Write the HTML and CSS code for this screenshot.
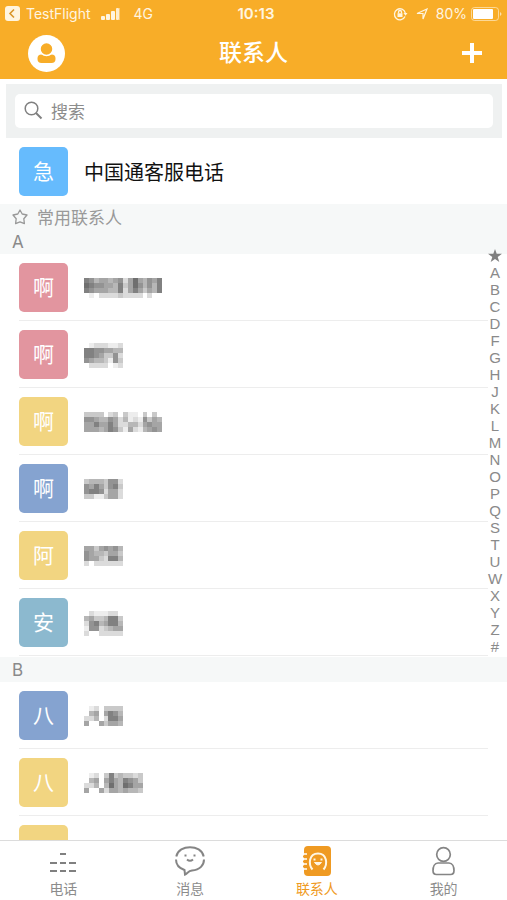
FILE: index.html
```html
<!DOCTYPE html>
<html lang="zh-CN">
<head>
    <meta charset="UTF-8">
    <meta name="viewport" content="width=device-width, initial-scale=1.0">
    <title>联系人</title>
    <link rel="stylesheet" href="styles.css">
</head>
<body>
    <header class="header">
        <!-- Status bar -->
        <div class="status">
            <div class="status-left">
                <svg width="15" height="15" viewBox="0 0 15 15"><rect width="15" height="15" rx="3" fill="#fff5e0"/><path d="M9 3.5L5 7.5l4 4" fill="none" stroke="#d9962a" stroke-width="1.6"/></svg>
                <span class="back-app">TestFlight</span>
                <svg class="signal" width="21" height="12" viewBox="0 0 21 12" fill="#fff5e0"><rect y="8" width="4" height="4" rx="1"/><rect x="5" y="6" width="4" height="6" rx="1"/><rect x="10" y="3" width="4" height="9" rx="1"/><rect x="15" width="3" height="12" rx="1" opacity=".9"/><rect x="18" width="1" height="12" opacity=".4"/></svg>
                <span>4G</span>
            </div>
            <span class="time">10:13</span>
            <div class="status-right">
                <svg width="15" height="14" viewBox="0 0 15 14" fill="none" stroke="#fff5e0" stroke-width="1.3"><path d="M12 9.500A5.500 5.500 0 1 1 12.300 6"/><path d="M10.500 6h4l-2 2.700z" fill="#fff5e0" stroke="none"/><rect x="4.500" y="6.300" width="5" height="3.700" fill="#fff5e0" stroke="none"/><path d="M5.500 6.500V5a1.500 1.500 0 0 1 3 0v1.500"/></svg>
                <svg width="12" height="12" viewBox="0 0 12 12" fill="none" stroke="#fff5e0" stroke-width="1.200"><path d="M11 1L7 11V5.500H1z"/></svg>
                <span>80%</span>
                <svg class="battery" width="31" height="14" viewBox="0 0 31 14"><rect x=".5" y=".5" width="27" height="13" rx="3" fill="none" stroke="#fff5e0" opacity=".6"/><rect x="2" y="2" width="20" height="10" rx="1" fill="#fff"/><path d="M29 5c2 1 2 3 0 4z" fill="#fff5e0" opacity=".7"/></svg>
            </div>
        </div>
        <!-- Title bar -->
        <div class="titlebar">
            <button class="icon-btn" aria-label="个人">
                <svg width="37" height="37" viewBox="0 0 37 37"><circle cx="18.500" cy="18.500" r="18.500" fill="#fff"/><rect x="9.500" y="19.500" width="18" height="8.500" rx="4" fill="#f8ad28"/><circle cx="18.500" cy="14" r="6.500" fill="#f8ad28" stroke="#fff" stroke-width="1.500"/></svg>
            </button>
            <h1>联系人</h1>
            <button class="icon-btn" aria-label="添加">
                <svg width="20" height="20" viewBox="0 0 20 20"><path d="M10 0v20M0 10h20" stroke="#fff" stroke-width="4"/></svg>
            </button>
        </div>
    </header>

    <main class="content">
        <div class="search">
            <label class="search-box">
                <svg width="19" height="19" viewBox="0 0 19 19" fill="none" stroke="#808080" stroke-width="1.500"><circle cx="7.500" cy="7.500" r="6.300"/><path d="M12 12l5.500 5.500" stroke-width="2"/></svg>
                <input type="search" placeholder="搜索" aria-label="搜索">
            </label>
        </div>

        <div class="service">
            <span class="avatar sky">急</span>
            <span>中国通客服电话</span>
        </div>

        <h2 class="section favourite">
            <svg width="16" height="16" viewBox="0 0 16 16" fill="none" stroke="#999" stroke-width="1.300" stroke-linejoin="round"><path d="M8 1l2.200 4 4.800 1-3.200 3.700.6 5L8 12.800 3.600 14.700l.6-5L1 6l4.800-1z"/></svg>
            常用联系人
        </h2>

        <h2 class="section">A</h2>
        <ul class="contacts">
            <li><span class="avatar pink">啊</span><svg class="name" data-cells="7645545625854657 8766554735864647 7655544725753547 0102222322220200"></svg></li>
            <li><span class="avatar pink">啊</span><svg class="name" data-cells="01222112 77665544 77653362 65443163 02222012"></svg></li>
            <li><span class="avatar yellow">啊</span><svg class="name" data-cells="3333023031103030 6654465241216354 5575575224425655 5554576315214565"></svg></li>
            <li><span class="avatar blue">啊</span><svg class="name" data-cells="34443662 65753673 67762552 33113552"></svg></li>
            <li><span class="avatar yellow">阿</span><svg class="name" data-cells="55356564 65443553 65532774 20222222"></svg></li>
            <li><span class="avatar teal">安</span><svg class="name" data-cells="02111220 45334773 26745774 16623455 20022222"></svg></li>
        </ul>

        <h2 class="section">B</h2>
        <ul class="contacts">
            <li><span class="avatar blue">八</span><svg class="name" data-cells="01203333 04505764 22402775 50053554"></svg></li>
            <li><span class="avatar yellow">八</span><svg class="name" data-cells="012037343323 045057547653 224048548755 500525545443"></svg></li>
            <li><span class="avatar yellow"></span></li>
        </ul>
    </main>

    <!-- Letter index, floats over the list -->
    <nav class="index" aria-label="索引"></nav>

    <nav class="tabs">
        <a href="#">
            <svg width="30" height="30" viewBox="0 0 30 30" stroke="#808080" stroke-width="2.200"><path d="M12 8h6M2 17h7M12 17h6M21 17h7M2 25h7M12 25h6M21 25h7"/></svg>
            电话
        </a>
        <a href="#">
            <svg width="30" height="30" viewBox="0 0 30 30" fill="none" stroke="#858585" stroke-width="2"><path d="M1 13.500C1 20 5 22.500 9.500 24L10 28.500C13 27 13 25 17 24.500C25 24 29 19 29 13.500M1.300 10.500C4-2 26-2 28.700 10.500"/><path d="M12 13.500q3 2.500 6 0"/><path d="M9.500 9.500h2M18.500 9.500h2"/></svg>
            消息
        </a>
        <a href="#" class="active">
            <svg width="30" height="30" viewBox="0 0 30 30"><rect x="2" width="27" height="30" rx="4" fill="#ef9a22"/><path d="M0 8h5M0 13h5M0 18h5M0 23h5" stroke="#fff" stroke-width="1.300"/><path d="M1 10.500h4M1 15.500h4M1 20.500h4" stroke="#ef9a22" stroke-width="2"/><g fill="none" stroke="#fff6e4" stroke-width="2"><path d="M10.500 23.500C6 18 7 7.500 16 7.500s10 10.500 5.500 16"/><path d="M12.500 16.500q3.500 5 7 0z" fill="#fff6e4" stroke-width="1"/><path d="M12.500 12.500v2M19.500 12.500v2"/></g></svg>
            联系人
        </a>
        <a href="#">
            <svg width="30" height="30" viewBox="0 0 30 30" fill="none" stroke="#858585" stroke-width="1.700"><circle cx="14.500" cy="8.500" r="6.800"/><path d="M9 17h11c3.500 0 5 4 5 7.500 0 3-1.500 4-3.500 4h-14c-2 0-3.500-1-3.500-4C4 21 5.500 17 9 17z"/></svg>
            我的
        </a>
    </nav>

    <script src="script.js"></script>
</body>
</html>
```

FILE: styles.css
```css
* {
    box-sizing: border-box;
}
body {
    margin: 0;
    height: 100vh;
    display: flex;
    flex-direction: column;
    position: relative;
    overflow: hidden;
    background: #fff;
    color: #111;
    font-family: Inter, "Noto Sans CJK SC", sans-serif;
}
.header {
    flex: none;
    background: #f8ad28;
    color: #fff;
}
.status {
    display: grid;
    grid-template-columns: 1fr auto 1fr;
    align-items: center;
    height: 27px;
    padding: 0 5px;
    font-size: 14px;
    color: #fff5e0;
}
.status-left, .status-right {
    display: flex;
    align-items: center;
    gap: 6px;
}
.status-right {
    justify-content: flex-end;
    gap: 8px;
}
.signal {
    margin: 0 6px 0 4px;
}
.battery {
    margin-left: -4px;
}
.time {
    padding-left: 5px;
    font-size: 15px;
    font-weight: 600;
}
.titlebar {
    display: flex;
    align-items: center;
    justify-content: space-between;
    height: 52px;
    padding: 0 25px 0 28px;
}
.titlebar h1 {
    margin: 0;
    padding: 0 20px 0 0;
    flex: 1;
    text-align: center;
    font-size: 23px;
    line-height: 52px;
    font-weight: 500;
}
.icon-btn {
    display: flex;
    padding: 0;
    border: 0;
    background: none;
    cursor: pointer;
}
.content {
    flex: 1;
    min-height: 0;
    overflow: hidden;
    padding-top: 5px;
}
.search {
    margin: 0 5px 0 6px;
    padding: 10px 9px;
    background: #eff1f1;
}
.search-box {
    display: flex;
    align-items: center;
    gap: 8px;
    height: 34px;
    padding: 0 9px 2px;
    border-radius: 5px;
    background: #fff;
}
.search-box input {
    flex: 1;
    min-width: 0;
    padding: 0;
    border: 0;
    outline: 0;
    background: none;
    font: 17px "Noto Sans CJK SC", sans-serif;
}
.search-box input::placeholder {
    color: #8c8c8c;
}
.service {
    display: flex;
    align-items: center;
    gap: 16px;
    height: 66px;
    padding-left: 19px;
    font-size: 20px;
}
.avatar {
    flex: none;
    width: 49px;
    height: 49px;
    border-radius: 5px;
    color: #fff;
    font-size: 21px;
    font-weight: 400;
    line-height: 49px;
    text-align: center;
}
.sky {
    background: #66bbfd;
}
.pink {
    background: #e2959f;
}
.yellow {
    background: #f2d581;
}
.blue {
    background: #85a3d0;
}
.teal {
    background: #8cb9cf;
}
.section {
    display: flex;
    align-items: center;
    gap: 9px;
    height: 25px;
    margin: 0;
    padding-left: 12px;
    background: #f6f8f8;
    color: #8a8a8a;
    font-size: 17px;
    font-weight: 400;
}
.favourite {
    color: #999;
}
.contacts {
    margin: 0;
    padding: 0 19px 1px;
    list-style: none;
}
.contacts li {
    display: flex;
    align-items: center;
    gap: 16px;
    height: 67px;
    border-bottom: 1px solid #ededed;
}
.name {
    margin-top: 2px;
}
.index {
    position: absolute;
    top: 247px;
    right: 4px;
    width: 16px;
    display: flex;
    flex-direction: column;
}
.index a {
    color: #8a8a8a;
    font: 15px/17px "Liberation Sans", Arial, sans-serif;
    text-align: center;
    text-decoration: none;
}
.index svg {
    display: block;
    margin: 2px auto;
}
.tabs {
    flex: none;
    display: grid;
    grid-template-columns: repeat(4, 1fr);
    height: 60px;
    padding-top: 5px;
    border-top: 1px solid #dcdcdc;
    background: #fff;
}
.tabs a {
    display: flex;
    flex-direction: column;
    align-items: center;
    gap: 3px;
    color: #8c8c8c;
    font-size: 14px;
    line-height: 20px;
    text-decoration: none;
}
.tabs .active {
    color: #ef9a22;
}
```

FILE: script.js
```js
// Blurred names: each digit is the darkness of one cell
document.querySelectorAll(".name").forEach(svg => {
    const rows = svg.dataset.cells.split(" ");
    const cols = rows[0].length;
    svg.setAttribute("width", Math.round(cols * 4.9));
    svg.setAttribute("height", Math.round(rows.length * 4.9));
    svg.setAttribute("viewBox", `0 0 ${cols} ${rows.length}`);
    svg.setAttribute("preserveAspectRatio", "none");
    svg.setAttribute("shape-rendering", "crispEdges");
    rows.forEach((row, y) => {
        [...row].forEach((d, x) => {
            const v = 255 - d * 18;
            svg.innerHTML += `<rect x="${x}" y="${y}" width="1" height="1" fill="rgb(${v},${v},${v})"/>`;
        });
    });
});

const index = document.querySelector(".index");
index.innerHTML = `<a href="#" aria-label="常用联系人"><svg width="14" height="13" viewBox="0 0 14 13"><path d="M7 0l1.700 4.800H14L9.700 8l1.600 5L7 9.900 2.700 13l1.600-5L0 4.800h5.300z" fill="#808080"/></svg></a>`;
[..."ABCDFGHJKLMNOPQSTUWXYZ#"].forEach(c => {
    index.innerHTML += `<a href="#">${c}</a>`;
});
```
